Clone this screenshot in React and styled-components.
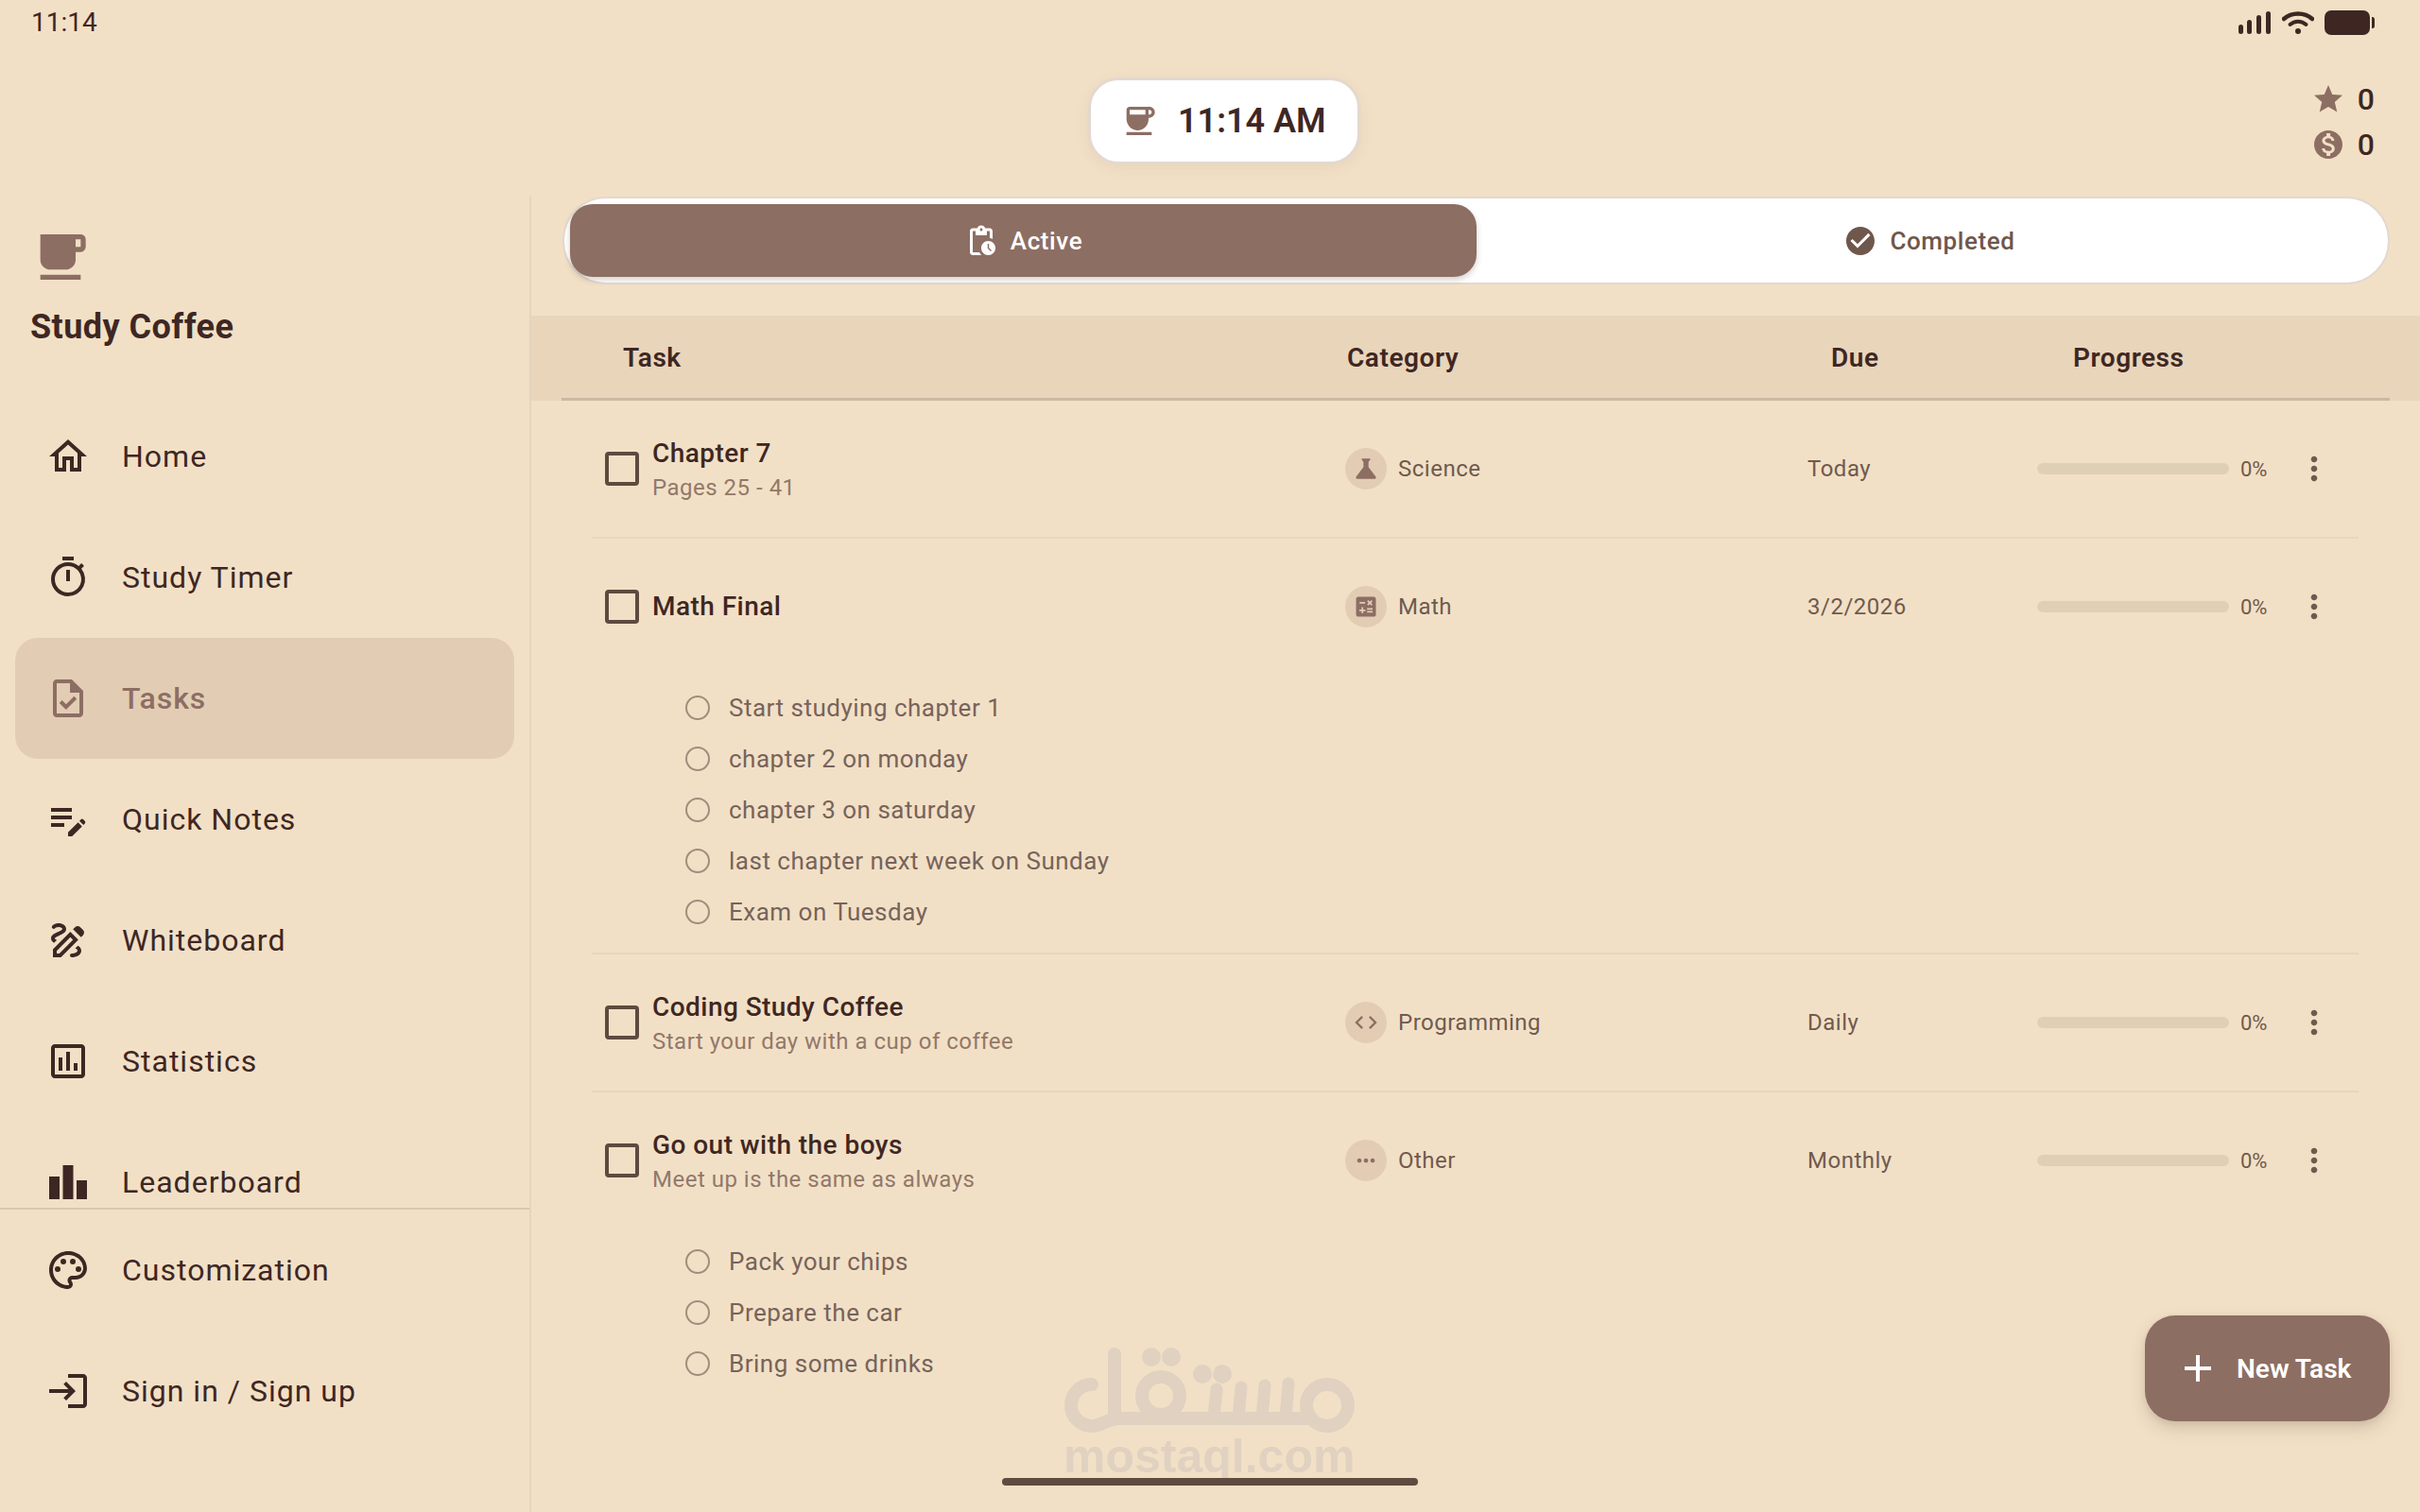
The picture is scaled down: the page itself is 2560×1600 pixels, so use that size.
import React from "react";
import styled, { createGlobalStyle } from "styled-components";
import {
  MdOutlineHome, MdOutlineTimer, MdOutlineTask, MdOutlineEditNote, MdOutlineDraw,
  MdOutlineAssessment, MdLeaderboard, MdOutlinePalette, MdOutlineLogin, MdStar,
  MdMonetizationOn, MdOutlinePendingActions, MdCheckCircle, MdScience, MdCalculate,
  MdCode, MdMoreHoriz, MdMoreVert, MdAdd, MdLocalCafe,
} from "react-icons/md";

const INK = "#3e2723";
const BROWN = "#8d6e63";
const BG = "#f2e0c6";
const TINT = "#e2cdb4";

const Global = createGlobalStyle`
  html, body { margin: 0; padding: 0; background: ${BG}; }
  * { box-sizing: border-box; }
  body { font-family: Roboto, "Liberation Sans", sans-serif; color: ${INK}; }
`;

const Page = styled.div`
  position: relative;
  width: 2560px;
  height: 1600px;
  overflow: hidden;
  display: flex;
  flex-direction: column;
  background: ${BG};
`;

const StatusBar = styled.div`
  height: 48px;
  flex: none;
  display: flex;
  align-items: center;
  justify-content: space-between;
  padding: 0 48px 0 33px;
  font-size: 28px;
  line-height: 48px;
`;

const StatusIcons = styled.div`
  display: flex;
  align-items: center;
  gap: 11px;
`;

const TopBar = styled.header`
  height: 160px;
  flex: none;
  display: grid;
  grid-template-columns: 1fr auto 1fr;
  padding-left: 30px;
`;

const ClockPill = styled.div`
  grid-column: 2;
  align-self: start;
  margin-top: 34px;
  width: 288px;
  height: 92px;
  display: flex;
  align-items: center;
  gap: 21px;
  padding-left: 31px;
  background: #fff;
  border: 3px solid #e4d8ce;
  border-radius: 32px;
  box-shadow: 0 4px 16px rgba(62, 39, 35, 0.06);
  font-size: 36px;
  font-weight: 600;
  line-height: 1;
  svg { flex: none; }
`;

const Wallet = styled.div`
  grid-column: 3;
  justify-self: end;
  margin: 39px 48px 0 0;
  display: flex;
  flex-direction: column;
  gap: 12px;
`;

const WalletRow = styled.div`
  height: 36px;
  display: flex;
  align-items: center;
  gap: 13px;
  font-size: 32px;
  font-weight: 500;
  color: ${INK};
  svg { color: ${BROWN}; flex: none; }
`;

const Body = styled.div`
  flex: 1;
  min-height: 0;
  display: flex;
`;

const Sidebar = styled.aside`
  width: 562px;
  flex: none;
  display: flex;
  flex-direction: column;
  border-right: 2px solid #e6d5bd;
`;

const Brand = styled.div`
  height: 211px;
  flex: none;
  padding: 32px 0 0 32px;
  display: flex;
  flex-direction: column;
  align-items: flex-start;
`;

const BrandCup = styled(MdLocalCafe)`
  color: ${BROWN};
  margin-bottom: 18px;
  display: block;
`;

const BrandName = styled.div`
  font-size: 36px;
  line-height: 48px;
  font-weight: 700;
  letter-spacing: 0.45px;
`;

const NavScroll = styled.nav`
  flex: 1;
  min-height: 0;
  overflow: hidden;
`;

const NavFoot = styled.div`
  flex: none;
  height: 322px;
  border-top: 2px solid #d8c8b2;
`;

const NavItem = styled.div`
  height: 128px;
  margin: 0 16px;
  padding-left: 32px;
  display: flex;
  align-items: center;
  gap: 33px;
  border-radius: 24px;
  font-size: 32px;
  letter-spacing: 1px;
  font-weight: ${(p) => (p.$active ? 500 : 400)};
  color: ${(p) => (p.$active ? BROWN : INK)};
  background: ${(p) => (p.$active ? TINT : "transparent")};
  svg { flex: none; }
`;

const Content = styled.main`
  flex: 1;
  min-width: 0;
  display: flex;
  flex-direction: column;
`;

const Tabs = styled.div`
  height: 93px;
  flex: none;
  margin: 0 32px 0 33px;
  padding: 6px;
  display: grid;
  grid-template-columns: 959px 1fr;
  background: #fff;
  border: 2px solid #e4d8ce;
  border-radius: 46px;
`;

const Tab = styled.div`
  display: flex;
  align-items: center;
  justify-content: center;
  gap: 13px;
  font-size: 26px;
  font-weight: 500;
  letter-spacing: 0.6px;
  border-radius: 24px;
  color: ${(p) => (p.$active ? "#fff" : "#6f574c")};
  background: ${(p) => (p.$active ? BROWN : "transparent")};
  box-shadow: ${(p) => (p.$active ? "0 3px 6px rgba(62,39,35,.22)" : "none")};
  svg { flex: none; color: ${(p) => (p.$active ? "#fff" : "#6f574c")}; }
`;

const HeadBand = styled.div`
  margin-top: 33px;
  height: 90px;
  flex: none;
  padding: 0 32px;
  background: #e9d5ba;
`;

const HeadRow = styled.div`
  height: 90px;
  padding: 1px 0 0 65px;
  display: grid;
  grid-template-columns: 766px 512px 256px 1fr;
  align-items: center;
  border-bottom: 3px solid #c9b8a2;
  font-size: 28px;
  font-weight: 600;
  letter-spacing: 0.55px;
`;

const TaskList = styled.div`
  margin: 0 65px 0 64px;
`;

const TaskBlock = styled.section`
  border-bottom: ${(p) => (p.$last ? "0" : "2px solid #e6d6bd")};
  padding-bottom: ${(p) => (p.$subs ? "16px" : "0")};
`;

const TaskRow = styled.div`
  height: 144px;
  padding-left: 14px;
  display: grid;
  grid-template-columns: 783px 489px 243px 1fr;
  align-items: center;
`;

const TaskCell = styled.div`
  display: flex;
  align-items: center;
  gap: 14px;
`;

const CheckBox = styled.span`
  width: 36px;
  height: 36px;
  flex: none;
  border: 4px solid #5f4a40;
  border-radius: 4px;
`;

const TaskText = styled.div`
  padding-top: ${(p) => (p.$note ? "3px" : "0")};
`;

const TaskTitle = styled.div`
  font-size: 28px;
  line-height: 36px;
  font-weight: 500;
  letter-spacing: 0.45px;
`;

const TaskNote = styled.div`
  font-size: 24px;
  line-height: 36px;
  color: #92786a;
  letter-spacing: 0.5px;
`;

const CategoryCell = styled.div`
  display: flex;
  align-items: center;
  gap: 12px;
`;

const CategoryDot = styled.span`
  width: 44px;
  height: 44px;
  flex: none;
  border-radius: 50%;
  display: flex;
  align-items: center;
  justify-content: center;
  background: ${TINT};
  color: ${BROWN};
`;

const MetaText = styled.span`
  display: block;
  font-size: 24px;
  color: #6f5a4f;
  letter-spacing: 0.5px;
`;

const ProgressCell = styled.div`
  display: flex;
  align-items: center;
`;

const Track = styled.div`
  width: 203px;
  height: 12px;
  flex: none;
  border-radius: 6px;
  background: #e0cfb7;
`;

const Percent = styled.span`
  width: 70px;
  flex: none;
  padding-left: 12px;
  font-size: 22px;
  color: #6f5a4f;
`;

const MoreButton = styled.span`
  width: 40px;
  height: 40px;
  flex: none;
  display: flex;
  align-items: center;
  justify-content: center;
  color: #6f5a4f;
`;

const SubList = styled.ul`
  list-style: none;
  margin: 8px 0 0;
  padding: 0 0 0 99px;
`;

const SubItem = styled.li`
  height: 54px;
  display: flex;
  align-items: center;
  gap: 20px;
  font-size: 26px;
  color: #77635a;
  letter-spacing: 0.5px;
`;

const SubCircle = styled.span`
  width: 26px;
  height: 26px;
  flex: none;
  border: 2.5px solid #a08d7e;
  border-radius: 50%;
`;

const Fab = styled.button`
  position: absolute;
  left: 2269px;
  top: 1392px;
  width: 259px;
  height: 112px;
  padding: 0 0 0 32px;
  display: flex;
  align-items: center;
  gap: 17px;
  border: 0;
  border-radius: 32px;
  background: ${BROWN};
  color: #fff;
  font: 600 28px Roboto, sans-serif;
  box-shadow: 0 8px 18px rgba(62, 39, 35, 0.16), 0 2px 6px rgba(62, 39, 35, 0.08);
`;

const Watermark = styled.div`
  position: absolute;
  left: 1120px;
  top: 1420px;
  width: 320px;
  pointer-events: none;
  color: #e0d1c1;
  svg { display: block; }
`;

const WatermarkUrl = styled.div`
  position: absolute;
  left: 5px;
  top: 93px;
  font: 700 50px/56px "Liberation Sans", Arial, sans-serif;
  white-space: nowrap;
`;

const HomeBar = styled.div`
  position: absolute;
  left: 1060px;
  top: 1564px;
  width: 440px;
  height: 8px;
  border-radius: 4px;
  background: #5f4b40;
`;

const Signal = () => (
  <svg width="36" height="26" viewBox="0 0 36 26" fill={INK}>
    <rect x="1" y="15" width="5" height="10" rx="2.5" />
    <rect x="10" y="10" width="5" height="15" rx="2.5" />
    <rect x="20" y="5" width="5" height="20" rx="2.5" />
    <rect x="30" y="1" width="5" height="24" rx="2.5" />
  </svg>
);

const Wifi = () => (
  <svg width="34" height="26" viewBox="0 0 34 26" fill="none" stroke={INK} strokeLinecap="round">
    <path d="M2 9 C10 1.5 24 1.5 32 9" strokeWidth="4.5" />
    <path d="M8.5 15 C13.5 10.5 20.5 10.5 25.5 15" strokeWidth="4" />
    <circle cx="17" cy="22" r="3" fill={INK} stroke="none" />
  </svg>
);

const Battery = () => (
  <svg width="53" height="28" viewBox="0 0 53 28" fill={INK}>
    <rect x="0" y="1" width="48" height="26" rx="7" />
    <path d="M50 8h0.5a2.5 2.5 0 0 1 2.5 2.5v7a2.5 2.5 0 0 1-2.5 2.5h-0.5z" />
  </svg>
);

const CoffeeCup = () => (
  <svg width="40" height="40" viewBox="0 0 24 24" fill={BROWN} fillRule="evenodd">
    <path d="M18.5 3H6c-1.1 0-2 .9-2 2v5.71c0 3.83 2.95 7.18 6.78 7.29 3.96.12 7.22-3.06 7.22-7v-1h.5c1.93 0 3.5-1.57 3.5-3.5S20.43 3 18.5 3zM16 5v3H6V5h10zm2.5 3H18V5h.5c.83 0 1.5.67 1.5 1.5S19.33 8 18.5 8zM4 19h16v2H4v-2z" />
  </svg>
);

const MostaqlLogo = () => (
  <svg width="320" height="100" viewBox="1120 1420 320 100" fill="none" stroke="currentColor" strokeWidth="14" strokeLinecap="round" aria-label="mostaql logo">
    <circle cx="1404" cy="1487" r="22" />
    <path d="M1178 1501 H1382" />
    <path d="M1155 1465 A22 22 0 1 0 1155 1509 C1165 1509 1172 1501 1184 1501" />
    <path d="M1179 1433 V1500" />
    <circle cx="1228" cy="1477" r="20" />
    <path d="M1284 1500 L1287 1470 M1310 1500 L1313 1468 M1335 1500 L1338 1466 M1360 1500 L1363 1464" strokeWidth="13" />
    <g fill="currentColor" stroke="none">
      <circle cx="1218" cy="1436" r="10" />
      <circle cx="1239" cy="1436" r="10" />
      <circle cx="1272" cy="1454" r="10" />
      <circle cx="1293" cy="1454" r="10" />
    </g>
  </svg>
);

const mainNav = [
  [MdOutlineHome, "Home"],
  [MdOutlineTimer, "Study Timer"],
  [MdOutlineTask, "Tasks", true],
  [MdOutlineEditNote, "Quick Notes"],
  [MdOutlineDraw, "Whiteboard"],
  [MdOutlineAssessment, "Statistics"],
  [MdLeaderboard, "Leaderboard"],
];

const footNav = [
  [MdOutlinePalette, "Customization"],
  [MdOutlineLogin, "Sign in / Sign up"],
];

const tasks = [
  { title: "Chapter 7", note: "Pages 25 - 41", Icon: MdScience, iconSize: 32, cat: "Science", due: "Today" },
  {
    title: "Math Final", Icon: MdCalculate, iconSize: 28, cat: "Math", due: "3/2/2026",
    subs: ["Start studying chapter 1", "chapter 2 on monday", "chapter 3 on saturday", "last chapter next week on Sunday", "Exam on Tuesday"],
  },
  { title: "Coding Study Coffee", note: "Start your day with a cup of coffee", Icon: MdCode, iconSize: 28, cat: "Programming", due: "Daily" },
  {
    title: "Go out with the boys", note: "Meet up is the same as always", Icon: MdMoreHoriz, iconSize: 28, cat: "Other", due: "Monthly", last: true,
    subs: ["Pack your chips", "Prepare the car", "Bring some drinks"],
  },
];

const NavEntry = ({ icon: Icon, label, active }) => (
  <NavItem $active={active}>
    <Icon size={48} />
    {label}
  </NavItem>
);

export default function App() {
  return (
    <Page>
      <Global />
      <StatusBar>
        <span>11:14</span>
        <StatusIcons>
          <Signal />
          <Wifi />
          <Battery />
        </StatusIcons>
      </StatusBar>
      <TopBar>
        <ClockPill>
          <CoffeeCup />
          11:14 AM
        </ClockPill>
        <Wallet>
          <WalletRow><MdStar size={36} />0</WalletRow>
          <WalletRow><MdMonetizationOn size={36} />0</WalletRow>
        </Wallet>
      </TopBar>
      <Body>
        <Sidebar>
          <Brand>
            <BrandCup size={64} />
            <BrandName>Study Coffee</BrandName>
          </Brand>
          <NavScroll>
            {mainNav.map(([icon, label, active]) => (
              <NavEntry key={label} icon={icon} label={label} active={active} />
            ))}
          </NavScroll>
          <NavFoot>
            {footNav.map(([icon, label]) => (
              <NavEntry key={label} icon={icon} label={label} />
            ))}
          </NavFoot>
        </Sidebar>
        <Content>
          <Tabs>
            <Tab $active><MdOutlinePendingActions size={36} />Active</Tab>
            <Tab><MdCheckCircle size={36} />Completed</Tab>
          </Tabs>
          <HeadBand>
            <HeadRow>
              <span>Task</span>
              <span>Category</span>
              <span>Due</span>
              <span>Progress</span>
            </HeadRow>
          </HeadBand>
          <TaskList>
            {tasks.map((t) => (
              <TaskBlock key={t.title} $last={t.last} $subs={!!t.subs}>
                <TaskRow>
                  <TaskCell>
                    <CheckBox />
                    <TaskText $note={!!t.note}>
                      <TaskTitle>{t.title}</TaskTitle>
                      {t.note && <TaskNote>{t.note}</TaskNote>}
                    </TaskText>
                  </TaskCell>
                  <CategoryCell>
                    <CategoryDot><t.Icon size={t.iconSize} /></CategoryDot>
                    <MetaText>{t.cat}</MetaText>
                  </CategoryCell>
                  <MetaText>{t.due}</MetaText>
                  <ProgressCell>
                    <Track />
                    <Percent>0%</Percent>
                    <MoreButton><MdMoreVert size={40} /></MoreButton>
                  </ProgressCell>
                </TaskRow>
                {t.subs && (
                  <SubList>
                    {t.subs.map((s) => (
                      <SubItem key={s}><SubCircle />{s}</SubItem>
                    ))}
                  </SubList>
                )}
              </TaskBlock>
            ))}
          </TaskList>
        </Content>
      </Body>
      <Watermark>
        <MostaqlLogo />
        <WatermarkUrl>mostaql.com</WatermarkUrl>
      </Watermark>
      <HomeBar />
      <Fab><MdAdd size={48} />New Task</Fab>
    </Page>
  );
}
